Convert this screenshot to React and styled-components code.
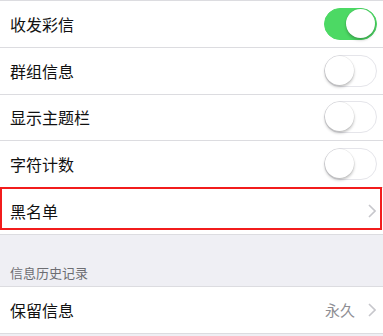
import React from 'react'
import styled, { createGlobalStyle } from 'styled-components'

const GlobalStyle = createGlobalStyle`
  html, body {
    margin: 0;
    padding: 0;
    background: #efeff4;
    font-family: "Noto Sans CJK SC", "Noto Sans", sans-serif;
  }
`

const Page = styled.div`
  width: 383px;
  height: 336px;
  overflow: hidden;
  background: #efeff4;
`

const Group = styled.div`
  background: #fff;
  border-top: 1px solid #dcdce0;
`

const Row = styled.div`
  position: relative;
  height: 45.75px;
  display: flex;
  align-items: center;
  padding: 0 7px 0 10px;
  border-bottom: 1px solid #dcdce0;
  box-sizing: content-box;
`

const Label = styled.span`
  flex: 1;
  font-size: 16px;
  color: #111;
`

const Value = styled.span`
  font-size: 15px;
  color: #8e8e93;
  margin-right: 13px;
`

const Toggle = styled.div`
  position: relative;
  width: 53px;
  height: 32px;
  border-radius: 16px;
  box-sizing: border-box;
  background: ${p => (p.$on ? '#4cd964' : '#fff')};
  border: 1.5px solid ${p => (p.$on ? '#4cd964' : '#e5e5ea')};
  margin-right: -1px;
`

const Knob = styled.div`
  position: absolute;
  top: 0;
  left: ${p => (p.$on ? '21px' : '0')};
  width: 29px;
  height: 29px;
  border-radius: 50%;
  background: #fff;
  box-shadow: 0 2px 3px rgba(0, 0, 0, 0.25), 0 0 0 0.5px rgba(0, 0, 0, 0.08);
`

const Highlight = styled.div`
  position: absolute;
  top: -1px;
  left: 0;
  right: 1px;
  bottom: 4px;
  border: 2px solid #f21c1c;
  pointer-events: none;
`

const SectionHeader = styled.div`
  height: 51px;
  display: flex;
  align-items: flex-end;
  padding: 0 10px 4px;
  box-sizing: border-box;
  font-size: 13px;
  color: #6d6d72;
`

const Chevron = () => (
  <svg width="8" height="14" viewBox="0 0 8 14">
    <polyline points="1,1 7,7 1,13" fill="none" stroke="#c7c7cc" strokeWidth="1.6" />
  </svg>
)

const Switch = ({ on }) => (
  <Toggle $on={on}>
    <Knob $on={on} />
  </Toggle>
)

const App = () => (
  <Page>
    <GlobalStyle />
    <Group>
      <Row>
        <Label>收发彩信</Label>
        <Switch on />
      </Row>
      <Row>
        <Label>群组信息</Label>
        <Switch />
      </Row>
      <Row>
        <Label>显示主题栏</Label>
        <Switch />
      </Row>
      <Row>
        <Label>字符计数</Label>
        <Switch />
      </Row>
      <Row>
        <Label>黑名单</Label>
        <Chevron />
        <Highlight />
      </Row>
    </Group>
    <SectionHeader>信息历史记录</SectionHeader>
    <Group>
      <Row>
        <Label>保留信息</Label>
        <Value>永久</Value>
        <Chevron />
      </Row>
    </Group>
  </Page>
)

export default App
